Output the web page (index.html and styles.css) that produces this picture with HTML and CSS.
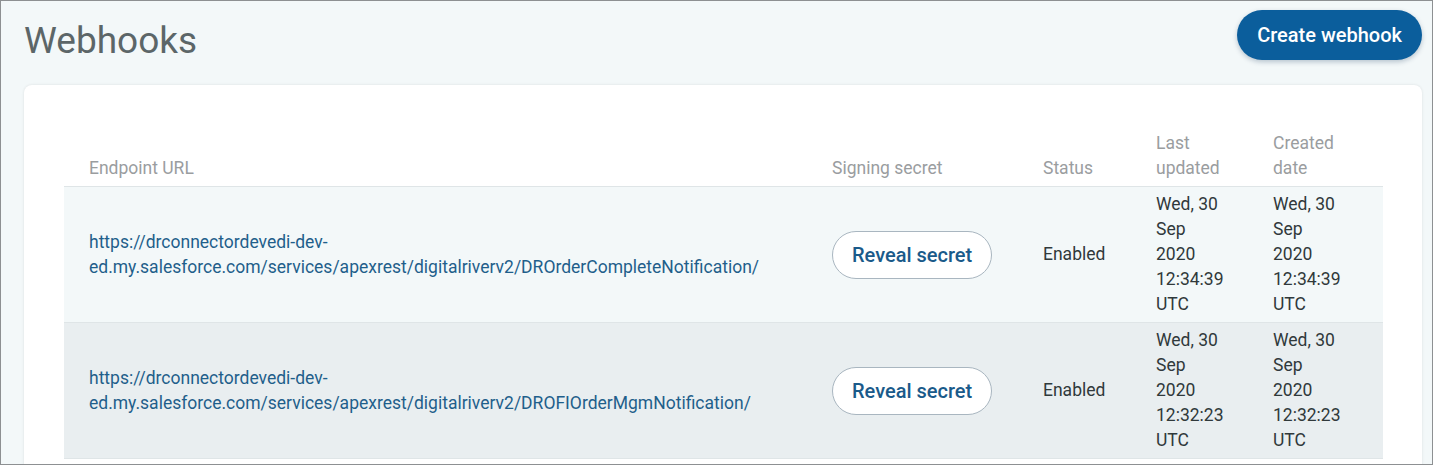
FILE: index.html
```html
<!DOCTYPE html>
<html lang="en">
<head>
<meta charset="utf-8">
<title>Webhooks</title>
<link rel="stylesheet" href="styles.css">
</head>
<body>
<div class="frame">
  <header class="topbar">
    <h1 class="title">Webhooks</h1>
    <button class="btn-primary" type="button">Create webhook</button>
  </header>
  <section class="card">
    <table class="hooks">
      <colgroup>
        <col class="c-url">
        <col class="c-secret">
        <col class="c-status">
        <col class="c-updated">
        <col class="c-created">
      </colgroup>
      <thead>
        <tr>
          <th>Endpoint URL</th>
          <th>Signing secret</th>
          <th>Status</th>
          <th class="date">Last updated</th>
          <th class="date">Created date</th>
        </tr>
      </thead>
      <tbody>
        <tr class="row-a">
          <td><a class="url" href="#">https://drconnectordevedi-dev-<br>ed.my.salesforce.com/services/apexrest/digitalriverv2/DROrderCompleteNotification/</a></td>
          <td><button class="btn-outline" type="button">Reveal secret</button></td>
          <td>Enabled</td>
          <td class="date"><span class="ln">Wed, 30</span> <span class="ln">Sep</span> <span class="ln">2020</span> <span class="ln">12:34:39</span> <span class="ln">UTC</span></td>
          <td class="date"><span class="ln">Wed, 30</span> <span class="ln">Sep</span> <span class="ln">2020</span> <span class="ln">12:34:39</span> <span class="ln">UTC</span></td>
        </tr>
        <tr class="row-b">
          <td><a class="url" href="#">https://drconnectordevedi-dev-<br>ed.my.salesforce.com/services/apexrest/digitalriverv2/DROFIOrderMgmNotification/</a></td>
          <td><button class="btn-outline" type="button">Reveal secret</button></td>
          <td>Enabled</td>
          <td class="date"><span class="ln">Wed, 30</span> <span class="ln">Sep</span> <span class="ln">2020</span> <span class="ln">12:32:23</span> <span class="ln">UTC</span></td>
          <td class="date"><span class="ln">Wed, 30</span> <span class="ln">Sep</span> <span class="ln">2020</span> <span class="ln">12:32:23</span> <span class="ln">UTC</span></td>
        </tr>
      </tbody>
    </table>
  </section>
</div>
</body>
</html>
```

FILE: styles.css
```css
* { box-sizing: border-box; }
html, body { margin: 0; padding: 0; height: 100%; }
body {
  font-family: Roboto, "Liberation Sans", Arial, sans-serif;
  background: #f3f8f9;
  overflow: hidden;
}
.frame {
  height: 465px;
  border: 1px solid #8d9092;
  padding: 0 10px 0 23px;
  overflow: hidden;
}
.topbar {
  display: flex;
  justify-content: space-between;
  align-items: flex-start;
  padding-top: 9px;
}
.title {
  margin: 11px 0 0 0;
  font-size: 37px;
  font-weight: 400;
  line-height: 40px;
  color: #5c6668;
}
.btn-primary {
  height: 50px;
  padding: 0 20px;
  border: none;
  border-radius: 25px;
  background: #0b5e9c;
  color: #ffffff;
  font-family: inherit;
  font-size: 20px;
  font-weight: 500;
  box-shadow: 0 2px 5px rgba(0, 40, 80, 0.25);
}
.card {
  margin-top: 24px;
  background: #ffffff;
  border-radius: 8px;
  box-shadow: 0 0 3px rgba(0, 0, 0, 0.1);
  padding: 41px 39px 0 40px;
  height: 400px;
}
.hooks {
  width: 100%;
  border-collapse: collapse;
  table-layout: fixed;
  font-size: 17.5px;
  line-height: 25px;
}
.c-url { width: 743px; }
.c-secret { width: 211px; }
.c-status { width: 113px; }
.c-updated { width: 117px; }
.c-created { width: 135px; }
.hooks th {
  text-align: left;
  font-weight: 400;
  color: #9a9d9f;
  vertical-align: bottom;
  padding: 5px 10px 5px 25px;
  border-bottom: 1px solid #dfe5e7;
}
.hooks td {
  vertical-align: middle;
  padding: 5px 10px 5px 25px;
  color: #30393b;
  border-bottom: 1px solid #dfe5e7;
}
.hooks th.date { padding-right: 20px; }
.ln { display: block; white-space: nowrap; }
.row-a td { background: #f3f8f9; }
.row-b td { background: #e9eef0; }
.url {
  color: #1f5f8b;
  text-decoration: none;
}
.btn-outline {
  height: 48px;
  padding: 0 19px;
  border: 1px solid #a9b6c0;
  border-radius: 24px;
  background: #ffffff;
  color: #1a5a8a;
  font-family: inherit;
  font-size: 20px;
  font-weight: 500;
}
```
